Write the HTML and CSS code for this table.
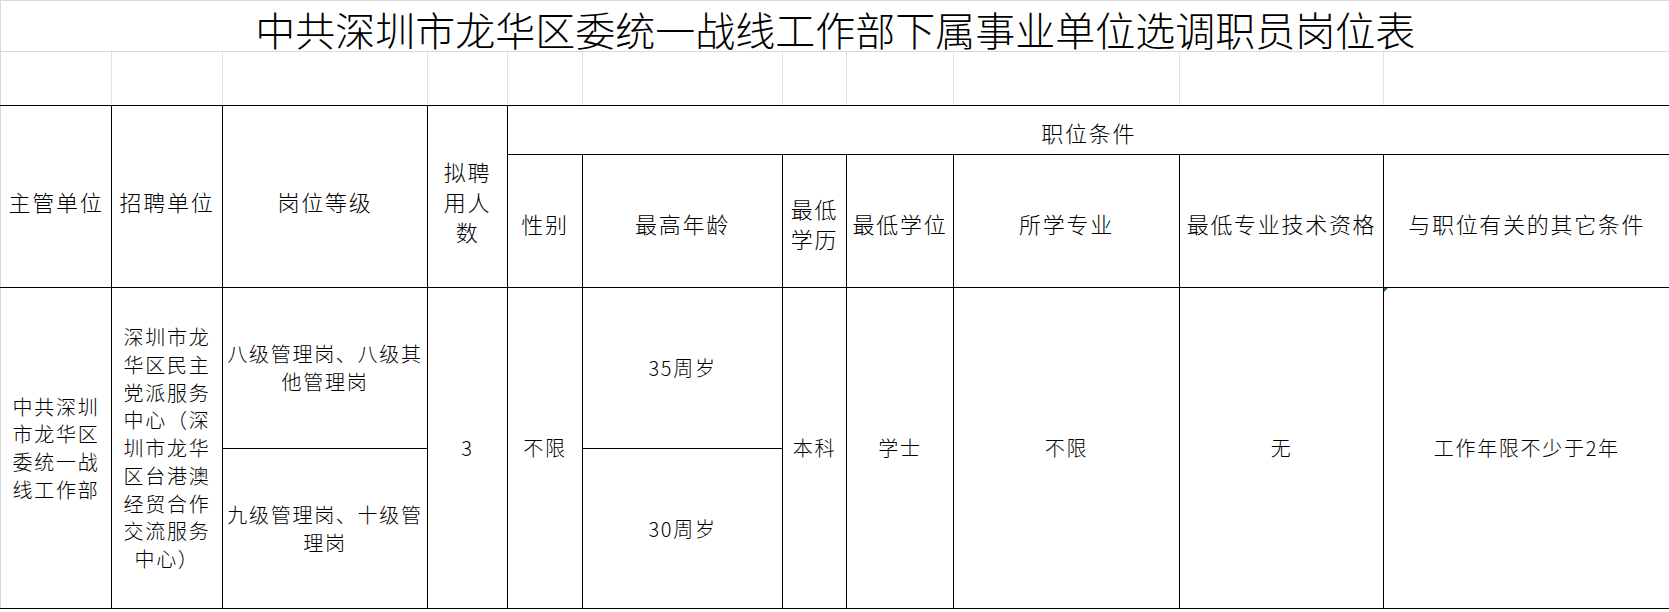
FILE: index.html
```html
<!DOCTYPE html>
<html lang="zh-CN">
<head>
<meta charset="utf-8">
<title>岗位表</title>
<link rel="stylesheet" href="styles.css">
</head>
<body>
<table class="sheet">
  <colgroup>
    <col class="w1"><col class="w2"><col class="w3"><col class="w4"><col class="w5"><col class="w6"><col class="w7"><col class="w8"><col class="w9"><col class="w10"><col class="w11">
  </colgroup>
  <tr class="r-title">
    <td colspan="11" class="title">中共深圳市龙华区委统一战线工作部下属事业单位选调职员岗位表</td>
  </tr>
  <tr class="r-blank">
    <td class="first"></td><td></td><td></td><td></td><td></td><td></td><td></td><td></td><td></td><td></td><td class="last"></td>
  </tr>
  <tr class="r-h1">
    <th rowspan="2" class="first tall">主管单位</th>
    <th rowspan="2" class="tall">招聘单位</th>
    <th rowspan="2" class="tall">岗位等级</th>
    <th rowspan="2" class="tall">拟聘<br>用人<br>数</th>
    <th colspan="7" class="last group">职位条件</th>
  </tr>
  <tr class="r-h2">
    <th>性别</th>
    <th>最高年龄</th>
    <th>最低<br>学历</th>
    <th>最低学位</th>
    <th>所学专业</th>
    <th>最低专业技术资格</th>
    <th class="last">与职位有关的其它条件</th>
  </tr>
  <tr class="r-d1">
    <td rowspan="2" class="first">中共深圳<br>市龙华区<br>委统一战<br>线工作部</td>
    <td rowspan="2">深圳市龙<br>华区民主<br>党派服务<br>中心（深<br>圳市龙华<br>区台港澳<br>经贸合作<br>交流服务<br>中心）</td>
    <td>八级管理岗、八级其<br>他管理岗</td>
    <td rowspan="2">3</td>
    <td rowspan="2">不限</td>
    <td>35周岁</td>
    <td rowspan="2">本科</td>
    <td rowspan="2">学士</td>
    <td rowspan="2">不限</td>
    <td rowspan="2">无</td>
    <td rowspan="2" class="last marked">工作年限不少于2年<span class="mark"></span></td>
  </tr>
  <tr class="r-d2">
    <td>九级管理岗、十级管<br>理岗</td>
    <td>30周岁</td>
  </tr>
</table>
</body>
</html>
```
FILE: styles.css
```css
body {
  margin: 0;
  background: #ffffff;
  color: #000000;
  font-family: "Noto Sans CJK SC", "Noto Sans CJK JP", sans-serif;
}

.sheet {
  border-collapse: collapse;
  table-layout: fixed;
  width: 1669px;
}

.w1 { width: 111px; }
.w2 { width: 111px; }
.w3 { width: 205px; }
.w4 { width: 80px; }
.w5 { width: 75px; }
.w6 { width: 200px; }
.w7 { width: 64px; }
.w8 { width: 107px; }
.w9 { width: 226px; }
.w10 { width: 204px; }
.w11 { width: 286px; }

.sheet td,
.sheet th {
  padding: 0;
  text-align: center;
  vertical-align: middle;
  font-weight: 300;
  border: 1px solid #000000;
}

.r-title { height: 51px; }
.r-blank { height: 54px; }
.r-h1 { height: 49px; }
.r-h2 { height: 133px; }
.r-d1 { height: 161px; }
.r-d2 { height: 160px; }

.sheet .title {
  font-size: 40px;
  line-height: 44px;
  padding-top: 6px;
  border-top: 1px solid #dadada;
  border-left: 1px solid #dadada;
  border-bottom: 1px solid #dadada;
  border-right: none;
}

.r-blank td {
  border-top: 1px solid #dadada;
  border-left: 1px solid #e2e2e2;
  border-right: 1px solid #e2e2e2;
  border-bottom: 1px solid #000000;
}

.sheet th {
  font-size: 22px;
  letter-spacing: 1.7px;
  line-height: 30px;
}

.sheet th.tall {
  padding-top: 8px;
}

.sheet th.group {
  padding-top: 4px;
}

.r-h2 th {
  padding-top: 4px;
}

.r-d1 td,
.r-d2 td {
  font-size: 20px;
  letter-spacing: 1.7px;
  line-height: 27.7px;
}

.sheet .first {
  border-left: 1px solid #d6d6d6;
}

.sheet .last {
  border-right: none;
}

.marked {
  position: relative;
}

.mark {
  position: absolute;
  left: 0;
  top: 0;
  width: 0;
  height: 0;
  border-top: 4px solid #217346;
  border-right: 4px solid transparent;
}
```
